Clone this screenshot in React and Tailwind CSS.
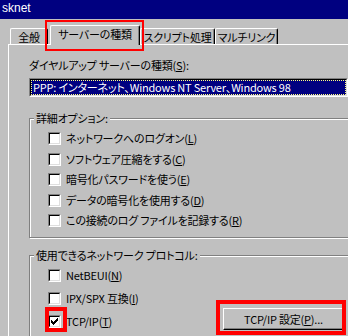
import React from 'react';
import clsx from 'clsx';

const Mn = ({ children }) => <span className="underline underline-offset-[1px]">{children}</span>;

const Tab = ({ label, active, className }) => (
  <div
    className={clsx(
      'flex justify-center whitespace-nowrap bg-[#c0c0c0] border-t border-l border-white border-r border-r-black rounded-t-[2px] shadow-[inset_-1px_0_0_#808080] leading-[13px]',
      active ? 'relative z-10 h-[20px] -mb-px pt-[2px]' : 'h-[16px] pt-[2px]',
      className
    )}
  >
    {label}
  </div>
);

const Checkbox = ({ checked }) => (
  <div className="w-[13px] h-[13px] shrink-0 border-t border-l border-[#808080] border-b border-r border-b-white border-r-white">
    <div className="w-full h-full bg-white border-t border-l border-black border-b border-r border-b-[#dfdfdf] border-r-[#dfdfdf] flex items-center justify-center">
      {checked && (
        <svg width="7" height="7" viewBox="0 0 7 7" shapeRendering="crispEdges">
          <path d="M0 2h1v1h1v1h1v-1h1v-1h1v-1h1v-1h1v3h-1v1h-1v1h-1v1h-1v1h-1v-1h-1v-1h-1z" fill="#000" />
        </svg>
      )}
    </div>
  </div>
);

const Row = ({ checked, children, className }) => (
  <div className={clsx('flex items-center h-[13px]', className)}>
    <Checkbox checked={checked} />
    <span className="ml-[5px] leading-[13px] whitespace-nowrap">{children}</span>
  </div>
);

const Group = ({ title, className, children }) => (
  <div className={clsx('w-[330px] shrink-0 border border-[#808080] shadow-[inset_1px_1px_0_#fff,1px_1px_0_#fff]', className)}>
    <div className="-mt-[8px] ml-[4px] px-[2px] w-fit h-[14px] leading-[14px] bg-[#c0c0c0] whitespace-nowrap">{title}</div>
    <div className="pl-[18px]">{children}</div>
  </div>
);

export default function App() {
  return (
    <div className="relative w-[348px] h-[336px] overflow-hidden bg-[#c0c0c0] text-black text-[11px] tracking-[-0.2px] font-['Noto_Sans_CJK_JP',sans-serif] [font-feature-settings:'palt'] [font-variant-east-asian:proportional-width] flex flex-col">
      {/* title bar */}
      <div className="shrink-0 h-[19px] bg-[#000080] text-white pl-[2px] font-['Liberation_Sans',sans-serif] text-[12px] tracking-normal leading-[17px]">sknet</div>

      {/* tabs */}
      <div className="shrink-0 h-[25px] pl-[10px] flex items-end">
        <Tab label="全般" className="w-[38px]" />
        <Tab label="サーバーの種類" active className="w-[90px] ml-[2px]" />
        <Tab label="スクリプト処理" className="w-[75px]" />
        <Tab label="マルチリンク" className="w-[63px]" />
      </div>

      {/* panel */}
      <div className="flex-1 min-h-0 ml-[8px] border-t border-l border-white pl-[20px] pt-[13px]">
        <div className="h-[14px] leading-[14px] whitespace-nowrap">
          ダイヤルアップ サーバーの種類(<Mn>S</Mn>):
        </div>
        <div className="mt-[6px] w-[319px] h-[19px] border-t border-l border-[#808080] border-b border-r border-b-white border-r-white">
          <div className="h-full border-t border-l border-black border-b border-r border-b-[#dfdfdf] border-r-[#dfdfdf]">
            <div className="h-full bg-[#000080] border border-dotted border-[#ffff80] text-white pl-[1px] leading-[13px] whitespace-nowrap">
              PPP: インターネット、Windows NT Server、Windows 98
            </div>
          </div>
        </div>

        <Group title="詳細オプション：" className="mt-[21px] h-[120px]">
          <Row className="mt-[7px]">ネットワークへのログオン(<Mn>L</Mn>)</Row>
          <Row className="mt-[8px]">ソフトウェア圧縮をする(<Mn>C</Mn>)</Row>
          <Row className="mt-[7px]">暗号化パスワードを使う(<Mn>E</Mn>)</Row>
          <Row className="mt-[8px]">データの暗号化を使用する(<Mn>D</Mn>)</Row>
          <Row className="mt-[7px]">この接続のログ ファイルを記録する(<Mn>R</Mn>)</Row>
        </Group>

        <Group title="使用できるネットワーク プロトコル：" className="mt-[17px] h-[100px]">
          <Row className="mt-[7px]">NetBEUI(<Mn>N</Mn>)</Row>
          <Row className="mt-[10px]">IPX/SPX 互換(<Mn>I</Mn>)</Row>
          <div className="mt-[3px] w-[296px] flex items-start">
            <Row checked className="mt-[7px]">TCP/IP(<Mn>T</Mn>)</Row>
            <button className="ml-auto w-[121px] h-[22px] bg-[#c0c0c0] border-t border-l border-white border-b border-r border-b-black border-r-black shadow-[inset_-1px_-1px_0_#808080] leading-[13px] whitespace-nowrap">
              TCP/IP 設定(<Mn>P</Mn>)...
            </button>
          </div>
        </Group>
      </div>

      {/* red annotation frames */}
      <div className="absolute left-[45px] top-[20px] w-[99px] h-[31px] border-2 border-[#ff0000]" />
      <div className="absolute left-[45px] top-[307px] w-[22px] h-[25px] border-4 border-[#ff0000]" />
      <div className="absolute left-[216px] top-[300px] w-[130px] h-[35px] border-4 border-[#ff0000]" />
    </div>
  );
}
